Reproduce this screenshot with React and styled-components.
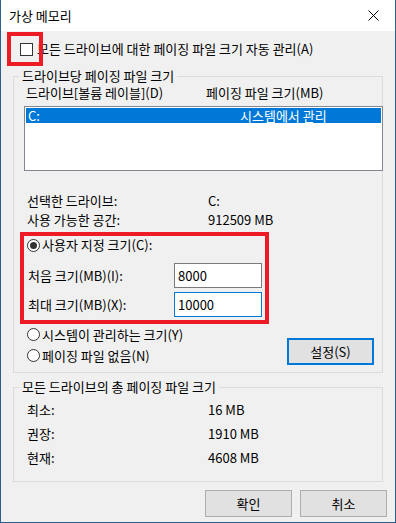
import React from 'react'
import styled, { createGlobalStyle } from 'styled-components'

const GlobalStyle = createGlobalStyle`
    html, body {
        margin: 0;
        padding: 0;
        background: #ffffff;
    }
    * {
        box-sizing: border-box;
    }
    body {
        font-family: "Noto Sans CJK KR", "Noto Sans", sans-serif;
        font-size: 13px;
        color: #000000;
    }
`

const listRows = [
    { drive: 'C:', size: '시스템에서 관리', selected: true },
]

const totals = [
    { label: '최소:', value: '16 MB' },
    { label: '권장:', value: '1910 MB' },
    { label: '현재:', value: '4608 MB' },
]

const Dialog = () => {
    return (
        <Window>
            <TitleBar>
                <span>가상 메모리</span>
                <CloseButton>
                    <svg width="11" height="11" viewBox="0 0 11 11">
                        <path d="M0.5 0.5 L10.5 10.5 M10.5 0.5 L0.5 10.5" stroke="#000" strokeWidth="1" />
                    </svg>
                </CloseButton>
            </TitleBar>
            <Body>
                <AutoRow>
                    <CheckBox />
                    <span>모든 드라이브에 대한 페이징 파일 크기 자동 관리(A)</span>
                    <Marker />
                </AutoRow>

                <Group $height={305}>
                    <Legend>드라이브당 페이징 파일 크기</Legend>
                    <HeaderRow>
                        <Col $w={180}>드라이브[볼륨 레이블](D)</Col>
                        <Col>페이징 파일 크기(MB)</Col>
                    </HeaderRow>
                    <ListBox>
                        {listRows.map(row => (
                            <ListItem key={row.drive} $selected={row.selected}>
                                <Col $w={212}>{row.drive}</Col>
                                <Col>{row.size}</Col>
                            </ListItem>
                        ))}
                    </ListBox>
                    <InfoRows>
                        <InfoRow>
                            <Col $w={181}>선택한 드라이브:</Col>
                            <Col>C:</Col>
                        </InfoRow>
                        <InfoRow>
                            <Col $w={181}>사용 가능한 공간:</Col>
                            <Col>912509 MB</Col>
                        </InfoRow>
                    </InfoRows>
                    <CustomBox>
                        <RadioRow $h={18}>
                            <Radio $checked />
                            <span>사용자 지정 크기(C):</span>
                        </RadioRow>
                        <FieldRow $top={9}>
                            <FieldLabel>처음 크기(MB)(I):</FieldLabel>
                            <Field>8000</Field>
                        </FieldRow>
                        <FieldRow $top={4}>
                            <FieldLabel>최대 크기(MB)(X):</FieldLabel>
                            <Field $focused>10000</Field>
                        </FieldRow>
                    </CustomBox>
                    <OptionsRow>
                        <div>
                            <RadioRow $h={21}>
                                <Radio />
                                <span>시스템이 관리하는 크기(Y)</span>
                            </RadioRow>
                            <RadioRow $h={21}>
                                <Radio />
                                <span>페이징 파일 없음(N)</span>
                            </RadioRow>
                        </div>
                        <Button $default>설정(S)</Button>
                    </OptionsRow>
                </Group>

                <Group $height={103} $top={6}>
                    <Legend>모든 드라이브의 총 페이징 파일 크기</Legend>
                    <TotalRows>
                        {totals.map(t => (
                            <TotalRow key={t.label}>
                                <Col $w={181}>{t.label}</Col>
                                <Col>{t.value}</Col>
                            </TotalRow>
                        ))}
                    </TotalRows>
                </Group>

                <ButtonBar>
                    <Button>확인</Button>
                    <Button>취소</Button>
                </ButtonBar>
            </Body>
        </Window>
    )
}

const Window = styled.div`
    width: 396px;
    height: 523px;
    display: flex;
    flex-direction: column;
    border: 1px solid #2b5f8e;
    border-top: none;
    background: #f0f0f0;
`

const TitleBar = styled.div`
    height: 31px;
    flex-shrink: 0;
    background: #ffffff;
    display: flex;
    align-items: center;
    justify-content: space-between;
    padding-left: 8px;
    line-height: 16px;
`

const CloseButton = styled.div`
    width: 46px;
    height: 31px;
    display: flex;
    align-items: center;
    justify-content: center;
    padding-left: 2px;
    padding-bottom: 1px;
`

const Body = styled.div`
    flex: 1;
    display: flex;
    flex-direction: column;
    background: #f0f0f0;
`

const AutoRow = styled.div`
    position: relative;
    height: 36px;
    display: flex;
    align-items: center;
    padding-left: 19px;
    line-height: 16px;
    span {
        margin-left: 4px;
    }
`

const Marker = styled.div`
    position: absolute;
    left: 6px;
    top: 1px;
    width: 36px;
    height: 34px;
    border: 4px solid #ed1c24;
`

const CheckBox = styled.div`
    width: 13px;
    height: 13px;
    border: 1px solid #333333;
    background: #ffffff;
    flex-shrink: 0;
`

const Group = styled.fieldset`
    margin: ${p => p.$top || 1}px 0 0 12px;
    padding: 0;
    width: 370px;
    height: ${p => p.$height}px;
    flex-shrink: 0;
    border: 1px solid #dcdcdc;
    min-width: 0;
`

const Legend = styled.legend`
    margin-left: 5px;
    padding: 0 3px;
    line-height: 16px;
    height: 16px;
`

const HeaderRow = styled.div`
    display: flex;
    height: 18px;
    line-height: 18px;
    margin-left: 12px;
`

const Col = styled.span`
    display: inline-block;
    width: ${p => (p.$w ? `${p.$w}px` : 'auto')};
    flex-shrink: 0;
    white-space: nowrap;
`

const ListBox = styled.div`
    margin: 4px 0 0 10px;
    width: 359px;
    height: 65px;
    border: 1px solid #828790;
    background: #ffffff;
    padding: 1px;
`

const ListItem = styled.div`
    display: flex;
    height: 15px;
    line-height: 15px;
    padding-left: 2px;
    background: ${p => (p.$selected ? '#0078d7' : 'transparent')};
    color: ${p => (p.$selected ? '#ffffff' : '#000000')};
`

const InfoRows = styled.div`
    margin: 20px 0 0 13px;
`

const InfoRow = styled.div`
    display: flex;
    height: 19px;
    line-height: 19px;
`

const CustomBox = styled.div`
    margin: 3px 0 0 6px;
    width: 249px;
    height: 92px;
    border: 4px solid #ed1c24;
`

const RadioRow = styled.div`
    display: flex;
    align-items: center;
    height: ${p => p.$h}px;
    line-height: ${p => p.$h}px;
    padding-left: 3px;
    span {
        margin-left: 2px;
    }
`

const Radio = styled.div`
    width: 13px;
    height: 13px;
    border-radius: 50%;
    border: 1px solid #333333;
    background: #ffffff;
    flex-shrink: 0;
    display: flex;
    align-items: center;
    justify-content: center;
    &::after {
        content: '';
        display: ${p => (p.$checked ? 'block' : 'none')};
        width: 7px;
        height: 7px;
        border-radius: 50%;
        background: #333333;
    }
`

const FieldRow = styled.div`
    display: flex;
    align-items: center;
    margin-top: ${p => p.$top}px;
    height: 25px;
    padding-left: 4px;
`

const FieldLabel = styled.span`
    width: 146px;
    line-height: 25px;
`

const Field = styled.div`
    width: 88px;
    height: 25px;
    line-height: 23px;
    padding-left: 3px;
    background: #ffffff;
    border: 1px solid ${p => (p.$focused ? '#0078d7' : '#7a7a7a')};
`

const OptionsRow = styled.div`
    display: flex;
    justify-content: space-between;
    align-items: flex-start;
    padding-left: 10px;
    padding-right: 8px;
`

const Button = styled.div`
    width: 87px;
    height: 27px;
    display: flex;
    align-items: center;
    justify-content: center;
    background: #e1e1e1;
    border: ${p => (p.$default ? '2px solid #0078d7' : '1px solid #adadad')};
    margin-top: ${p => (p.$default ? '14px' : '0')};
`

const TotalRows = styled.div`
    margin: 3px 0 0 13px;
`

const TotalRow = styled.div`
    display: flex;
    height: 24px;
    line-height: 24px;
`

const ButtonBar = styled.div`
    display: flex;
    justify-content: flex-end;
    gap: 8px;
    margin: 8px 8px 0 0;
`

const App = () => (
    <>
        <GlobalStyle />
        <Dialog />
    </>
)

export default App
